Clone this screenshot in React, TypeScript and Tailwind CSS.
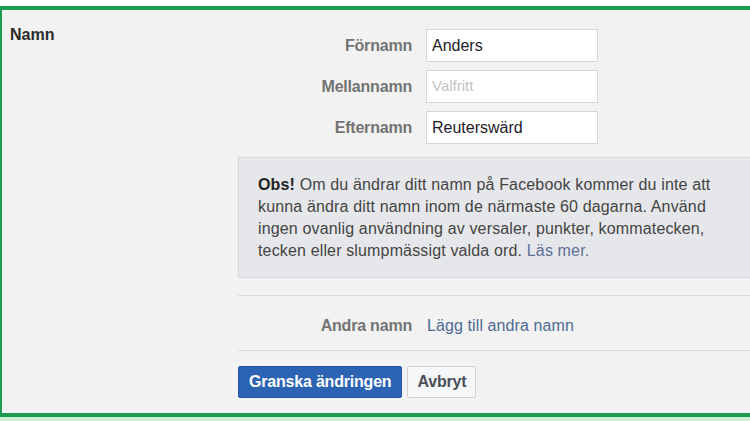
const labelCls =
  "text-right font-bold text-[16px] leading-[18px] text-[#737373] tracking-[-0.2px]";

const Row = ({ label, value, placeholder }: { label: string; value?: string; placeholder?: string }) => (
  <div className="flex items-center h-[33px]">
    <div className={`w-[174px] pr-0 ${labelCls}`}>{label}</div>
    <div className="ml-[14px] w-[172px] h-[33px] bg-white border border-[#d3d6db] flex items-center px-[5px]">
      {value ? (
        <span className="text-[16px] text-[#1d2129]">{value}</span>
      ) : (
        <span className="text-[15px] text-[#c4c4c4]">{placeholder}</span>
      )}
    </div>
  </div>
);

export default function App() {
  return (
    <div
      className="w-[750px] h-[421px] bg-white flex flex-col overflow-hidden"
      style={{ fontFamily: '"Liberation Sans", Arial, sans-serif' }}
    >
      <div className="h-[6px] shrink-0" />
      <div className="h-[411px] shrink-0 bg-[#f2f2f2] border-t-4 border-b-4 border-l-2 border-[#1f9a50] flex">
        <div className="w-[236px] shrink-0 pl-[8px] pt-[13px]">
          <span className="font-bold text-[16px] leading-[18px] text-[#2a2a2a]">Namn</span>
        </div>

        <div className="flex-1 min-w-0 pt-[19px] overflow-hidden">
          <div className="flex flex-col gap-[8px]">
            <Row label="Förnamn" value="Anders" />
            <Row label="Mellannamn" placeholder="Valfritt" />
            <Row label="Efternamn" value="Reuterswärd" />
          </div>

          <div className="mt-[13px] w-[540px] h-[121px] bg-[#e6e7ea] border border-[#d6d8dc] pl-[19px] pt-[16px]">
            <p className="text-[16px] leading-[22px] tracking-[0.15px] text-[#444] whitespace-nowrap">
              <span className="font-bold text-[#222]">Obs!</span> Om du ändrar ditt namn på Facebook kommer du inte att
              <br />
              kunna ändra ditt namn inom de närmaste 60 dagarna. Använd
              <br />
              ingen ovanlig användning av versaler, punkter, kommatecken,
              <br />
              tecken eller slumpmässigt valda ord. <span className="text-[#5b6f98]">Läs mer.</span>
            </p>
          </div>

          <div className="mt-[17px] border-t border-[#dcdcdc]" />

          <div className="flex items-center pt-[21px] pb-[15px]">
            <div className={`w-[174px] ${labelCls}`}>Andra namn</div>
            <span className="ml-[15px] text-[16px] leading-[18px] text-[#4f6a94] tracking-[0.1px]">Lägg till andra namn</span>
          </div>

          <div className="border-t border-[#dcdcdc]" />

          <div className="mt-[15px] flex gap-[5px]">
            <button className="h-[32px] px-[10px] bg-[#2c63b3] border border-[#2656a3] rounded-[2px] text-white font-bold text-[16px] tracking-[-0.2px]">
              Granska ändringen
            </button>
            <button className="h-[32px] px-[9px] bg-[#f6f7f9] border border-[#ced0d4] rounded-[2px] text-[#4b4f56] font-bold text-[16px] tracking-[-0.2px]">
              Avbryt
            </button>
          </div>
        </div>
      </div>
      <div className="h-[4px] shrink-0 bg-[#cdeed6]" />
    </div>
  );
}
